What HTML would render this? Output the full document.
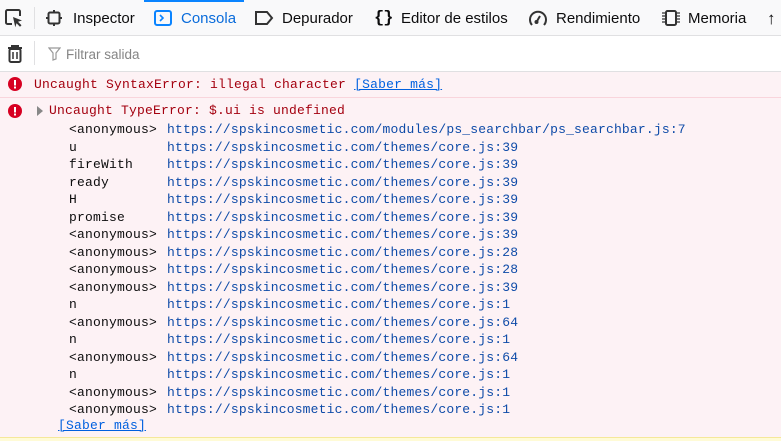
<!DOCTYPE html>
<html><head><meta charset="utf-8"><style>
*{margin:0;padding:0;box-sizing:border-box}
body{width:781px;height:441px;overflow:hidden;background:#fff;font-family:"Liberation Sans",sans-serif;position:relative}
.tb{position:absolute;left:0;top:0;width:781px;height:36px;background:#f9f9fa;border-bottom:1px solid #e0e0e2}
.tab{position:absolute;top:0;height:35px;font-size:15px;color:#0c0c0d;line-height:37px;white-space:nowrap}
.fb{position:absolute;top:36px;left:0;width:781px;height:36px;border-bottom:1px solid #e0e0e2;background:#fff}
.mono{font-family:"Liberation Mono","DejaVu Sans Mono",monospace;font-size:13px;letter-spacing:0.2px}
.r1{position:absolute;top:72px;left:0;width:781px;height:26px;background:#fdf2f5;border-bottom:1px solid #f9d5dc}
.r2{position:absolute;top:98px;left:0;width:781px;height:339px;background:#fdf2f5}
.err{color:#a4000f}
.lnk{color:#0060df;text-decoration:underline}
.st{position:absolute;top:121px;line-height:17.5px;white-space:pre;color:#0c0c0d}
.st2{color:#0e4ba8;letter-spacing:0.18px}
</style></head><body>
<div class="tb">
 <svg style="position:absolute;left:4px;top:8px" width="20" height="20" viewBox="0 0 20 20"><path d="M8 16H3.5a1.5 1.5 0 0 1-1.5-1.5v-11A1.5 1.5 0 0 1 3.5 2h11A1.5 1.5 0 0 1 16 3.5V8" fill="none" stroke="#333" stroke-width="2"/><path d="M9 9l9 3.5-4 1.2 3.5 3.5-1.5 1.5-3.5-3.5-1.2 4z" fill="#333"/></svg>
 <div style="position:absolute;left:34px;top:7px;width:1px;height:22px;background:#e0e0e2"></div>
 <div class="tab" style="left:46px"><svg style="position:absolute;left:0;top:10px" width="16" height="16" viewBox="0 0 16 16"><rect x="2.5" y="2.5" width="11" height="11" rx="1.5" fill="none" stroke="#333" stroke-width="2"/><path d="M8 0v3M8 13v3M0 8h3M13 8h3" stroke="#333" stroke-width="2"/></svg><span style="position:absolute;left:27px">Inspector</span></div>
 <div style="position:absolute;left:144px;top:0;width:100px;height:2px;background:#0a84ff"></div>
 <div class="tab" style="left:154px;color:#0a6cdb"><svg style="position:absolute;left:0;top:10px" width="18" height="16" viewBox="0 0 18 16"><rect x="1" y="1" width="16" height="14" rx="2" fill="none" stroke="#0a84ff" stroke-width="2"/><path d="M6 5l3 3-3 3" fill="none" stroke="#0a84ff" stroke-width="1.6"/></svg><span style="position:absolute;left:27px">Consola</span></div>
 <div class="tab" style="left:254px"><svg style="position:absolute;left:0;top:11px" width="20" height="14" viewBox="0 0 20 14"><path d="M2 1h11l5 6-5 6H2z" fill="none" stroke="#333" stroke-width="2"/></svg><span style="position:absolute;left:28px">Depurador</span></div>
 <div class="tab" style="left:374px"><span style="position:absolute;left:0;font-weight:bold;font-family:'Liberation Mono',monospace;font-size:17px;letter-spacing:-1px">{}</span><span style="position:absolute;left:27px">Editor de estilos</span></div>
 <div class="tab" style="left:528px"><svg style="position:absolute;left:0;top:9px" width="20" height="18" viewBox="0 0 20 18"><path d="M4 16A8 8 0 1 1 16 16" fill="none" stroke="#333" stroke-width="2"/><circle cx="8.5" cy="13" r="2" fill="#333"/><path d="M8.5 13L12 7" stroke="#333" stroke-width="2"/></svg><span style="position:absolute;left:28px">Rendimiento</span></div>
 <div class="tab" style="left:661px"><svg style="position:absolute;left:0;top:10px" width="20" height="16" viewBox="0 0 20 16"><rect x="5" y="1" width="10" height="14" rx="1.5" fill="none" stroke="#333" stroke-width="2"/><path d="M1 3h3M1 6h3M1 9h3M1 12h3M16 3h3M16 6h3M16 9h3M16 12h3" stroke="#333" stroke-width="1.2"/></svg><span style="position:absolute;left:27px">Memoria</span></div>
 <div class="tab" style="left:767px;font-size:17px">↑</div>
</div>
<div class="fb">
 <svg style="position:absolute;left:7px;top:9px" width="16" height="18" viewBox="0 0 16 18"><path d="M1 3h14M5 3V1h6v2" fill="none" stroke="#333" stroke-width="2"/><rect x="2.5" y="4" width="11" height="13" rx="1.5" fill="none" stroke="#333" stroke-width="2"/><path d="M6 7v7M10 7v7" stroke="#333" stroke-width="1.5"/></svg>
 <div style="position:absolute;left:34px;top:5px;width:1px;height:24px;background:#e0e0e2"></div>
 <svg style="position:absolute;left:48px;top:11px" width="13" height="14" viewBox="0 0 13 14"><path d="M1 1h11L8 6v6l-3 1V6z" fill="none" stroke="#999" stroke-width="1.2"/></svg>
 <span style="position:absolute;left:66px;top:11px;font-size:13.5px;color:#858585">Filtrar salida</span>
</div>
<div class="r1">
 <svg style="position:absolute;left:8px;top:5px" width="14" height="14" viewBox="0 0 14 14"><circle cx="7" cy="7" r="7" fill="#d70022"/><rect x="6" y="3" width="2" height="5.5" fill="#fff"/><rect x="6" y="9.5" width="2" height="2" fill="#fff"/></svg>
 <span class="mono err" style="position:absolute;left:34px;top:5px;white-space:pre">Uncaught SyntaxError: illegal character <span class="lnk">[Saber más]</span></span>
</div>
<div class="r2">
 <svg style="position:absolute;left:8px;top:6px" width="14" height="14" viewBox="0 0 14 14"><circle cx="7" cy="7" r="7" fill="#d70022"/><rect x="6" y="3" width="2" height="5.5" fill="#fff"/><rect x="6" y="9.5" width="2" height="2" fill="#fff"/></svg>
 <svg style="position:absolute;left:37px;top:8px" width="6" height="10" viewBox="0 0 6 10"><path d="M0 0l6 5-6 5z" fill="#888"/></svg>
 <span class="mono err" style="position:absolute;left:49px;top:5px;white-space:pre">Uncaught TypeError: $.ui is undefined</span>
 <span class="mono" style="position:absolute;left:58px;top:320px"><span class="lnk">[Saber más]</span></span>
</div>
<div class="mono st" style="left:69px">&lt;anonymous&gt;
u
fireWith
ready
H
promise
&lt;anonymous&gt;
&lt;anonymous&gt;
&lt;anonymous&gt;
&lt;anonymous&gt;
n
&lt;anonymous&gt;
n
&lt;anonymous&gt;
n
&lt;anonymous&gt;
&lt;anonymous&gt;</div>
<div class="mono st st2" style="left:167px">https://spskincosmetic.com/modules/ps_searchbar/ps_searchbar.js:7
https://spskincosmetic.com/themes/core.js:39
https://spskincosmetic.com/themes/core.js:39
https://spskincosmetic.com/themes/core.js:39
https://spskincosmetic.com/themes/core.js:39
https://spskincosmetic.com/themes/core.js:39
https://spskincosmetic.com/themes/core.js:39
https://spskincosmetic.com/themes/core.js:28
https://spskincosmetic.com/themes/core.js:28
https://spskincosmetic.com/themes/core.js:39
https://spskincosmetic.com/themes/core.js:1
https://spskincosmetic.com/themes/core.js:64
https://spskincosmetic.com/themes/core.js:1
https://spskincosmetic.com/themes/core.js:64
https://spskincosmetic.com/themes/core.js:1
https://spskincosmetic.com/themes/core.js:1
https://spskincosmetic.com/themes/core.js:1</div>
<div style="position:absolute;left:0;top:437px;width:781px;height:4px;background:#fffbd6;border-top:1px solid #f5e89a"></div>
</body></html>
